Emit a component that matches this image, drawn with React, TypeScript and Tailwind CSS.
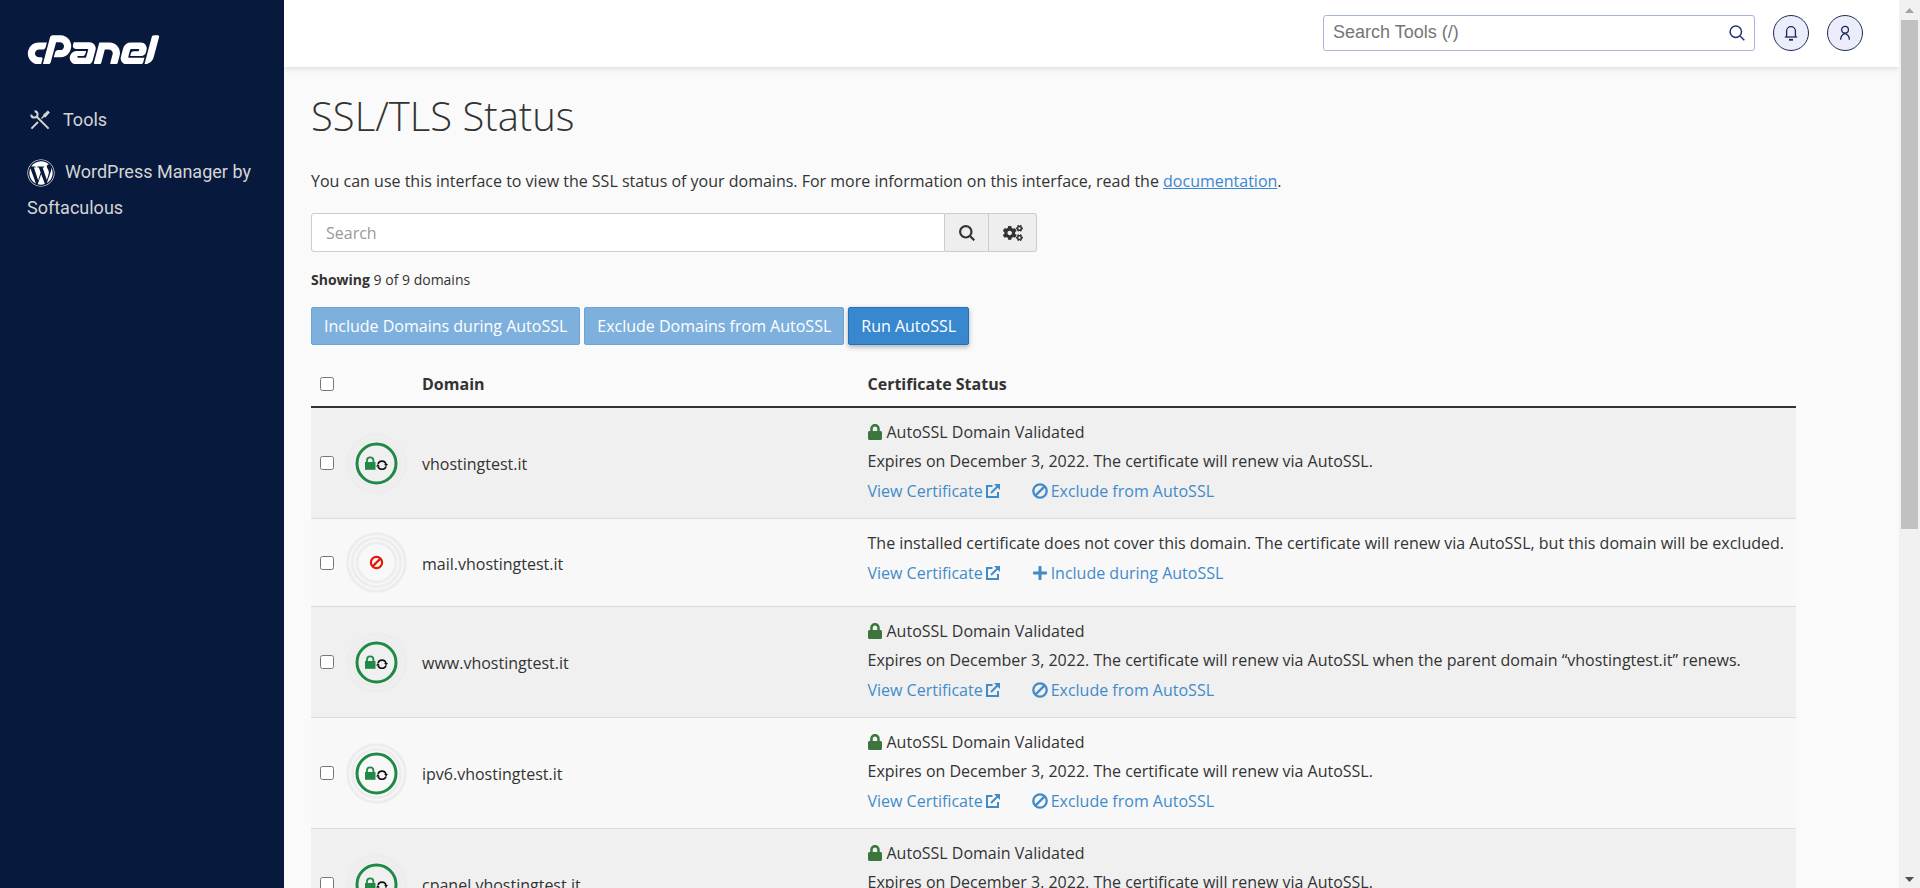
import React, { useState } from 'react';
import { FaCogs, FaLock, FaPlus, FaWordpress } from 'react-icons/fa';
import { SiCpanel } from 'react-icons/si';

interface DomainRow {
  name: string;
  validated: boolean;
  message: string;
}

const domains: DomainRow[] = [
  {
    name: 'vhostingtest.it',
    validated: true,
    message: 'Expires on December 3, 2022. The certificate will renew via AutoSSL.',
  },
  {
    name: 'mail.vhostingtest.it',
    validated: false,
    message:
      'The installed certificate does not cover this domain. The certificate will renew via AutoSSL, but this domain will be excluded.',
  },
  {
    name: 'www.vhostingtest.it',
    validated: true,
    message:
      'Expires on December 3, 2022. The certificate will renew via AutoSSL when the parent domain “vhostingtest.it” renews.',
  },
  {
    name: 'ipv6.vhostingtest.it',
    validated: true,
    message: 'Expires on December 3, 2022. The certificate will renew via AutoSSL.',
  },
  {
    name: 'cpanel.vhostingtest.it',
    validated: true,
    message: 'Expires on December 3, 2022. The certificate will renew via AutoSSL.',
  },
];

const ToolsIcon = () => (
  <svg viewBox="0 0 20 20" className="h-5 w-5 shrink-0" fill="none" stroke="currentColor">
    <path d="M7 7 L18.6 18.6" strokeWidth="2" />
    <path d="M1.4 18.6 L8 12" strokeWidth="2" />
    <path d="M11.5 8.5 L15 5" strokeWidth="1.4" />
    <path d="M13.2 5.2 L17.8 1 L19.4 2.4 L15.2 7.2 Z" fill="currentColor" strokeWidth="1" strokeLinejoin="round" />
    <path d="M4.6 1.2 A3.2 3.2 0 1 1 1.2 4.6" strokeWidth="2" />
  </svg>
);

const SearchIcon = ({ className, strokeWidth }: { className: string; strokeWidth: number }) => (
  <svg viewBox="0 0 16 16" className={className} fill="none" stroke="currentColor" strokeWidth={strokeWidth}>
    <circle cx="6.8" cy="6.8" r="5.7" />
    <path d="M11 11 L15.3 15.3" />
  </svg>
);

const BellIcon = () => (
  <svg viewBox="0 0 16 18" className="h-[18px] w-4" fill="none" stroke="currentColor" strokeWidth="1.3">
    <path d="M1.8 13 H14.2" />
    <path d="M3.6 13 V7 a4.4 4.4 0 0 1 8.8 0 V13" />
    <path d="M6 15.8 H10" strokeWidth="1.8" />
  </svg>
);

const UserIcon = () => (
  <svg viewBox="0 0 12 16" className="h-4 w-3" fill="none" stroke="currentColor" strokeWidth="1.3">
    <circle cx="6" cy="4.8" r="3.4" />
    <path d="M1.6 14.8 c0 -3.6 1.6 -5.2 4.4 -6.4 c2.8 1.2 4.4 2.8 4.4 6.4" />
  </svg>
);

const BanIcon = ({ className }: { className: string }) => (
  <svg viewBox="0 0 16 16" className={className} fill="none" stroke="currentColor" strokeWidth="2.3">
    <circle cx="8" cy="8" r="6.7" />
    <path d="M3.4 12.6 L12.6 3.4" />
  </svg>
);

const ExternalIcon = () => (
  <svg viewBox="0 0 14 14" className="h-3.5 w-3.5" fill="none" stroke="currentColor" strokeWidth="2">
    <path d="M6.5 2 H1 V13 H12 V8" />
    <path d="M5 9 L11.5 2.5" />
    <path d="M8 0 H14 V6 Z" fill="currentColor" stroke="none" />
  </svg>
);

const StatusBadge = ({ validated }: { validated: boolean }) => (
  <svg viewBox="0 0 61 61" className="block h-[61px] w-[61px]" fill="none">
    <circle cx="30.5" cy="30.5" r="28.8" stroke="#ededed" strokeWidth="3" />
    <circle cx="30.5" cy="30.5" r="24.2" stroke="#ededed" strokeWidth="3" />
    {validated ? (
      <>
        <circle cx="30.5" cy="30.5" r="19.5" stroke="#1f8a46" strokeWidth="3" />
        <path d="M19 29 h10.5 v7.8 h-10.5 Z" fill="#1f8a46" />
        <path d="M21 30 V27.6 a3.2 3.2 0 0 1 6.4 0 V30" stroke="#1f8a46" strokeWidth="1.8" />
        <path d="M32 31 a4.2 4.2 0 0 1 8 0" stroke="#111" strokeWidth="1.6" />
        <path d="M40 33.4 a4.2 4.2 0 0 1 -8 0" stroke="#111" strokeWidth="1.6" />
        <path d="M38.2 31 h3.8 l-1.9 2.4 Z" fill="#111" />
        <path d="M30 33.4 h3.8 l-1.9 -2.4 Z" fill="#111" />
      </>
    ) : (
      <>
        <circle cx="30.5" cy="30.5" r="19.5" stroke="#ededed" strokeWidth="3" />
        <circle cx="30.5" cy="30.5" r="5.6" stroke="#e11b0c" strokeWidth="2.2" />
        <path d="M26.6 34.4 L34.4 26.6" stroke="#e11b0c" strokeWidth="2.2" />
      </>
    )}
  </svg>
);

const Sidebar = () => (
  <aside className="w-[284px] shrink-0 bg-[#08193e] px-[27px] pt-[35px] font-['Roboto',sans-serif] text-lg leading-9 text-[#d4d4d4]">
    <a href="#home" aria-label="cPanel" className="block text-white">
      <SiCpanel viewBox="0 9.3 24 5.3" className="h-[29px] w-[133px]" />
    </a>
    <nav className="mt-[38px] flex flex-col gap-4">
      <a href="#tools" className="flex items-center gap-[13px] pl-[3px]">
        <ToolsIcon />
        Tools
      </a>
      <a href="#wordpress" className="block">
        <FaWordpress className="mr-[10px] inline h-7 w-7 align-middle text-white" />
        WordPress Manager by Softaculous
      </a>
    </nav>
  </aside>
);

const TopBar = () => (
  <header className="flex h-[67px] shrink-0 items-start justify-end gap-[18px] bg-white pt-[15px] pr-9 shadow-[0_1px_6px_rgba(0,0,0,0.15)]">
    <div className="flex h-9 w-[432px] items-center rounded-[3px] border border-[#a9b5da] px-[9px] text-[#1d3275]">
      <input
        type="text"
        aria-label="Search Tools"
        placeholder="Search Tools (/)"
        className="min-w-0 flex-1 bg-transparent pb-0.5 font-['Liberation_Sans',Arial,sans-serif] text-lg leading-6 outline-none placeholder:text-[#757575]"
      />
      <SearchIcon className="h-4 w-4" strokeWidth={1.5} />
    </div>
    <button type="button" aria-label="Notifications" className="flex h-9 w-9 items-center justify-center rounded-full border border-[#1b2b57] bg-[#ebedfb] text-[#1b2b57]">
      <BellIcon />
    </button>
    <button type="button" aria-label="Account" className="flex h-9 w-9 items-center justify-center rounded-full border border-[#1b2b57] bg-[#ebedfb] text-[#1b2b57]">
      <UserIcon />
    </button>
  </header>
);

const ScrollTrack = () => (
  <div className="flex w-[21px] shrink-0 flex-col items-center bg-[#f1f1f1]" aria-hidden="true">
    <svg viewBox="0 0 21 20" className="h-5 w-[21px] shrink-0">
      <path d="M6 13 L10.5 8 L15 13 Z" fill="#a3a3a3" />
    </svg>
    <div className="flex min-h-0 w-[17px] flex-1 flex-col">
      <div className="h-3/5 bg-[#c1c1c1]" />
    </div>
    <svg viewBox="0 0 21 20" className="h-5 w-[21px] shrink-0">
      <path d="M6 9 L10.5 14 L15 9 Z" fill="#505050" />
    </svg>
  </div>
);

export default function App() {
  const [selected, setSelected] = useState<string[]>([]);

  const toggleDomain = (name: string) => {
    setSelected((prev) => (prev.includes(name) ? prev.filter((n) => n !== name) : [...prev, name]));
  };

  const toggleAll = () => {
    setSelected(selected.length === domains.length ? [] : domains.map((d) => d.name));
  };

  return (
    <div className="flex h-screen overflow-hidden bg-[#fafafa] font-['Open_Sans',sans-serif] text-base text-[#333]">
      <Sidebar />

      <div className="flex min-w-0 flex-1 flex-col">
        <TopBar />

        <main className="min-h-0 flex-1 overflow-hidden pt-[21px] pr-[103px] pl-[27px]">
          <h1 className="text-[40px] leading-[56px] font-light">SSL/TLS Status</h1>
          <p className="mt-[25px] leading-6">
            You can use this interface to view the SSL status of your domains. For more information on this interface, read the{' '}
            <a href="#documentation" className="text-[#3a87cf] underline">
              documentation
            </a>
            .
          </p>

          {/* Search */}
          <div className="mt-5 flex h-[39px] w-full max-w-[726px]">
            <input
              type="text"
              aria-label="Search domains"
              placeholder="Search"
              className="min-w-0 flex-1 rounded-l-[3px] border border-[#ccc] bg-white px-[14px] outline-none placeholder:text-[#999]"
            />
            <button type="button" aria-label="Search" className="flex w-11 items-center justify-center border-y border-r border-[#ccc] bg-[#eee]">
              <SearchIcon className="h-4 w-4" strokeWidth={2.2} />
            </button>
            <button type="button" aria-label="Settings" className="flex w-12 items-center justify-center rounded-r-[3px] border-y border-r border-[#ccc] bg-[#eee]">
              <FaCogs className="h-5 w-5" />
            </button>
          </div>

          <p className="mt-[18px] text-sm leading-5">
            <strong className="font-bold">Showing</strong> 9 of 9 domains
          </p>

          {/* Bulk actions */}
          <div className="mt-[17px] flex gap-1">
            <button type="button" className="h-[38px] rounded-[2px] border border-[#6fa3d4] bg-[#7eb0de] px-3 text-white">
              Include Domains during AutoSSL
            </button>
            <button type="button" className="h-[38px] rounded-[2px] border border-[#6fa3d4] bg-[#7eb0de] px-3 text-white">
              Exclude Domains from AutoSSL
            </button>
            <button type="button" className="h-[38px] rounded-[2px] border border-[#2a6fb5] bg-[#3888cf] px-3 text-white shadow-[0_2px_5px_rgba(0,0,0,0.3)]">
              Run AutoSSL
            </button>
          </div>

          <table className="mt-4 w-full table-fixed border-collapse text-left">
            <thead>
              <tr className="h-[46px] border-b-2 border-[#333]">
                <th className="w-[35px] pl-[9px]">
                  <input
                    type="checkbox"
                    aria-label="Select all domains"
                    checked={selected.length === domains.length}
                    onChange={toggleAll}
                    className="block h-3.5 w-3.5"
                  />
                </th>
                <th className="w-16" aria-label="Status" />
                <th className="w-[30%] pl-3 font-bold">Domain</th>
                <th className="pl-3 font-bold">Certificate Status</th>
              </tr>
            </thead>
            <tbody>
              {domains.map((domain) => (
                <tr key={domain.name} className="border-b border-[#dcdcdc] odd:bg-[#f0f0f0] even:bg-[#f8f8f8]">
                  <td className="pl-[9px]">
                    <input
                      type="checkbox"
                      aria-label={`Select ${domain.name}`}
                      checked={selected.includes(domain.name)}
                      onChange={() => toggleDomain(domain.name)}
                      className="block h-3.5 w-3.5"
                    />
                  </td>
                  <td className="py-[13px]">
                    <StatusBadge validated={domain.validated} />
                  </td>
                  <td className="pt-0.5 pl-3">{domain.name}</td>
                  <td className="pt-3 pb-[15px] pl-3 align-top">
                    {domain.validated && (
                      <div className="mb-[5px] flex items-center gap-[5px] leading-6">
                        <FaLock className="h-4 w-3.5 text-[#3c763d]" />
                        AutoSSL Domain Validated
                      </div>
                    )}
                    <p className="leading-6 whitespace-nowrap">{domain.message}</p>
                    <div className="mt-[6px] flex gap-8 leading-6 text-[#428bca]">
                      <a href="#certificate" className="flex items-center gap-[3px]">
                        View Certificate
                        <ExternalIcon />
                      </a>
                      <button type="button" className="flex items-center gap-[3px]">
                        {domain.validated ? <BanIcon className="h-4 w-4" /> : <FaPlus className="h-4 w-4" />}
                        {domain.validated ? 'Exclude from AutoSSL' : 'Include during AutoSSL'}
                      </button>
                    </div>
                  </td>
                </tr>
              ))}
            </tbody>
          </table>
        </main>
      </div>

      <ScrollTrack />
    </div>
  );
}
